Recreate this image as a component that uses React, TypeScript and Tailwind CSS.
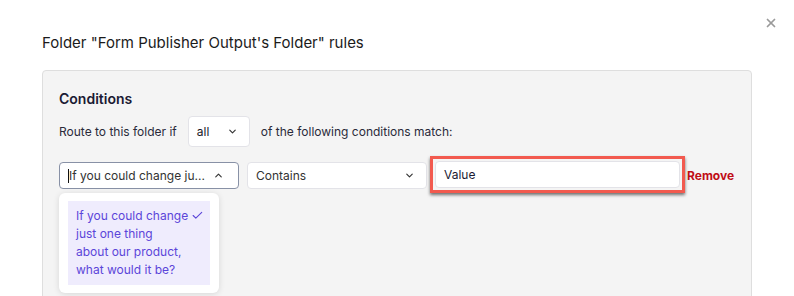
import { Check, ChevronDown, ChevronUp, X } from "lucide-react";

const FONT = "font-['Inter','Noto_Sans',sans-serif]";

export default function App() {
  return (
    <div className={`${FONT} relative w-[794px] h-[296px] overflow-hidden bg-white`}>
      <button className="absolute right-[16px] top-[16px] text-[#9a9a9a]">
        <X className="w-[14px] h-[14px]" strokeWidth={3} />
      </button>

      <h1 className="pl-[42px] pt-[32px] text-[15px] leading-[21px] text-[#1b1b1b]">
        Folder "Form Publisher Output's Folder" rules
      </h1>

      <div className="ml-[42px] mt-[17px] w-[710px] h-[260px] rounded-[4px] border border-[#dedede] bg-[#f4f4f4] px-[16px] pt-[18px]">
        <h2 className="text-[14px] leading-[20px] font-semibold text-[#1a1a33]">Conditions</h2>

        <div className="mt-[7px] flex items-center text-[12px] text-[#2a2a3a]">
          <span>Route to this folder if</span>
          <div className="ml-[11px] flex h-[31px] w-[62px] items-center justify-between rounded-[4px] border border-[#e3e3e8] bg-white pl-[8px] pr-[11px]">
            <span className="text-[#1a1a2a]">all</span>
            <ChevronDown className="w-[11px] h-[11px] text-[#333]" strokeWidth={2.5} />
          </div>
          <span className="ml-[11px]">of the following conditions match:</span>
        </div>

        <div className="mt-[15px] flex items-start text-[12px]">
          <div className="relative">
            <div className="flex h-[27px] w-[180px] items-center justify-between rounded-[4px] border border-[#8891a6] bg-white pl-[8px] pr-[14px] text-[#333]">
              <span className="flex items-center whitespace-nowrap">
                <span className="inline-block h-[14px] w-px bg-[#111]" />
                If you could change ju...
              </span>
              <ChevronUp className="w-[11px] h-[11px] text-[#333]" strokeWidth={2.5} />
            </div>
            <div className="absolute left-0 top-[31px] w-[160px] rounded-[6px] bg-white px-[9px] py-[8px] shadow-[0_1px_6px_rgba(0,0,0,0.12)]">
              <div className="flex items-start bg-[#efecfd] py-[6px] pl-[8px] pr-[6px] text-[12px] leading-[18px] text-[#5b45d9] whitespace-nowrap">
                <span>
                  If you could change
                  <br />
                  just one thing
                  <br />
                  about our product,
                  <br />
                  what would it be?
                </span>
                <Check className="ml-[3px] mt-[2px] w-[13px] h-[13px]" strokeWidth={2} />
              </div>
            </div>
          </div>

          <div className="ml-[8px] flex h-[27px] w-[180px] items-center justify-between rounded-[4px] border border-[#e3e3e8] bg-white pl-[8px] pr-[11px] text-[#333]">
            <span>Contains</span>
            <ChevronDown className="w-[11px] h-[11px] text-[#333]" strokeWidth={2.5} />
          </div>

          <div className="ml-[3px] -mt-[6px] border-[3px] border-[#f25a4f] p-[2px] shadow-[0_2px_3px_rgba(0,0,0,0.55)]">
            <div className="flex h-[27px] w-[245px] items-center rounded-[4px] border border-[#e3e3e8] bg-white pl-[8px] text-[#1a1a33]">
              Value
            </div>
          </div>

          <button className="ml-[2px] h-[27px] text-[12px] font-bold text-[#c00d16]">Remove</button>
        </div>
      </div>
    </div>
  );
}
